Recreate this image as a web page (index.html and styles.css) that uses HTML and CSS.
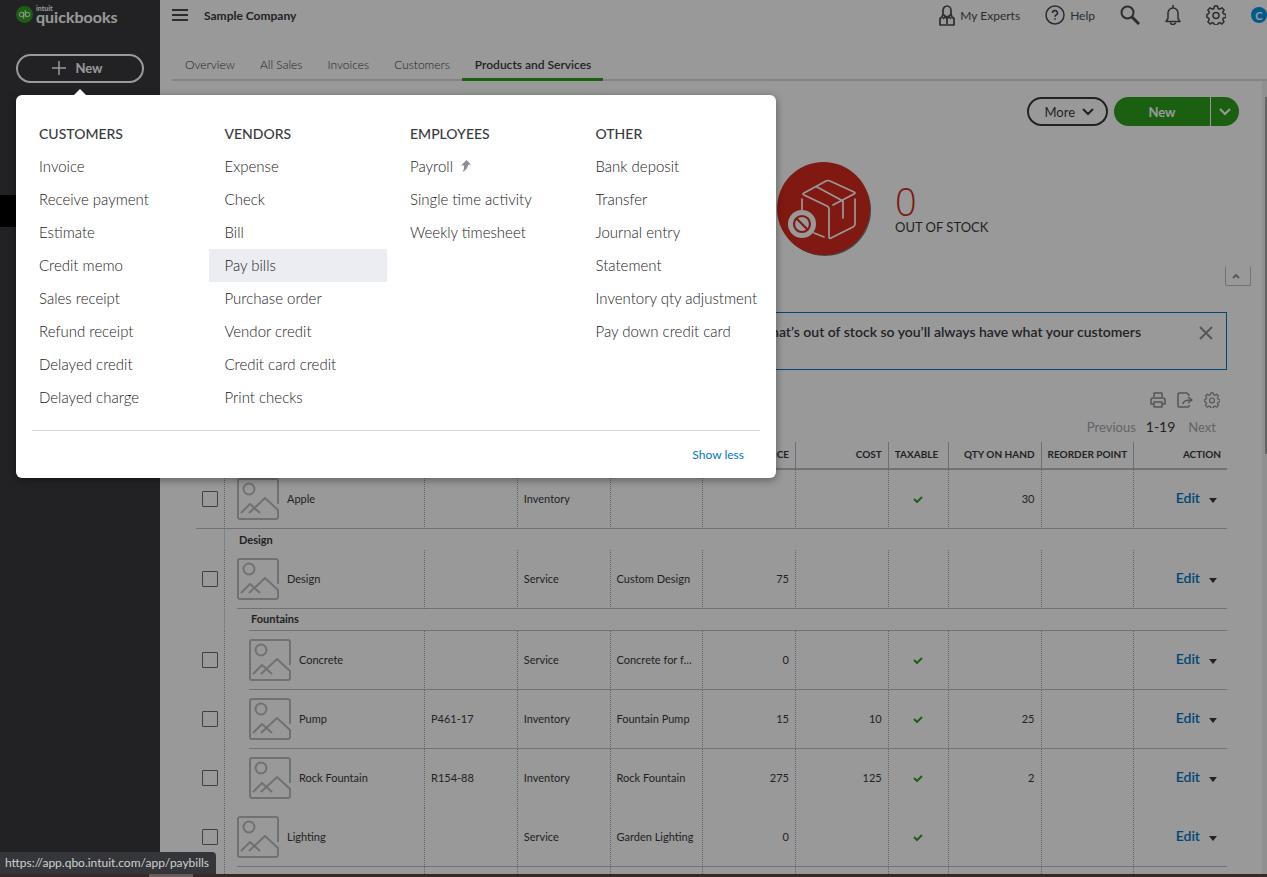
FILE: index.html
```html
<!DOCTYPE html>
<html lang="en">
<head>
    <meta charset="utf-8">
    <title>Products and Services</title>
    <link rel="stylesheet" href="styles.css">
</head>
<body>
    <!-- shared icons -->
    <svg class="defs" aria-hidden="true">
        <symbol id="thumb" viewBox="0 0 42 42">
            <path d="M41 26V3a2 2 0 0 0-2-2H3a2 2 0 0 0-2 2v36a2 2 0 0 0 2 2h36a2 2 0 0 0 2-2v-7L28 20 12 35M4 35l9-9 10 9" fill="none" stroke="#bbbcc0" stroke-width="2" stroke-linejoin="round"/>
            <circle cx="12" cy="11" r="5.500" fill="none" stroke="#bbbcc0" stroke-width="2"/>
        </symbol>
        <symbol id="check" viewBox="0 0 10 8">
            <path d="M1 4l3 3 5-5" fill="none" stroke="#2ca01c" stroke-width="2"/>
        </symbol>
        <symbol id="gear" viewBox="0 0 20 20">
            <path d="M8.500 1h3l.6 2.500 1.600.7 2.200-1.400 2.200 2.200-1.400 2.200.7 1.600 2.500.6v3l-2.500.6-.7 1.600 1.400 2.200-2.200 2.200-2.200-1.400-1.600.7-.6 1.700h-3l-.6-1.700-1.600-.7-2.200 1.400L1.900 16.800l1.400-2.200-.7-1.600-1.700-.6v-3l1.700-.6.7-1.600L1.900 5l2.200-2.200 2.200 1.400 1.600-.7z" fill="none" stroke="currentColor" stroke-width="1.500" stroke-linejoin="round"/>
            <circle cx="10" cy="10.500" r="3" fill="none" stroke="currentColor" stroke-width="1.500"/>
        </symbol>
    </svg>

    <div class="shell">
        <aside class="sidebar">
            <a href="#" class="logo">
                <svg width="17" height="17" viewBox="0 0 17 17" aria-hidden="true">
                    <circle cx="8.500" cy="8.500" r="8.500" fill="#2ca01c"/>
                    <circle cx="5.500" cy="8.500" r="2.200" fill="none" stroke="#fff"/>
                    <circle cx="11.500" cy="8.500" r="2.200" fill="none" stroke="#fff"/>
                    <path d="M7.700 6.300v6.500M9.300 10.700V4.200" stroke="#fff"/>
                </svg>
                <span class="wordmark"><small>intuit</small>quickbooks</span>
            </a>
            <button type="button" class="create">
                <svg width="16" height="16" viewBox="0 0 16 16" aria-hidden="true"><path d="M8 1v14M1 8h14" stroke="currentColor" stroke-width="1.500"/></svg>
                New
            </button>
            <div class="current"></div>
        </aside>

        <main class="main">
            <header class="topbar">
                <button type="button" class="icon" aria-label="Menu">
                    <svg width="16" height="12" viewBox="0 0 16 12"><path d="M0 1h16M0 6h16M0 11h16" stroke="currentColor" stroke-width="2"/></svg>
                </button>
                <strong class="company">Sample Company</strong>
                <nav class="tools">
                    <a href="#">
                        <svg width="16" height="21" viewBox="0 0 16 21" aria-hidden="true"><path d="M4 9V5.500a4 4.500 0 0 1 8 0V9l-2.500 2.500h-3zM4 9l-1 3-2 1.500V20h14v-6.500L13 12l-1-3M4 14l2-2.500L8 14l2-2.500 2 2.500M8 14v5" fill="none" stroke="currentColor" stroke-width="1.700" stroke-linejoin="round"/></svg>
                        My Experts
                    </a>
                    <a href="#">
                        <svg width="20" height="20" viewBox="0 0 20 20" aria-hidden="true"><circle cx="10" cy="10" r="9" fill="none" stroke="currentColor" stroke-width="1.500"/><path d="M7.500 8a2.500 2.300 0 1 1 3.500 2q-1 .5-1 1.800M10 13.200v1.600" fill="none" stroke="currentColor" stroke-width="1.600"/></svg>
                        Help
                    </a>
                    <button type="button" class="icon" aria-label="Search">
                        <svg width="20" height="20" viewBox="0 0 20 20"><circle cx="7.500" cy="7.500" r="6" fill="none" stroke="currentColor" stroke-width="2"/><path d="M12 12l7 7" stroke="currentColor" stroke-width="3"/></svg>
                    </button>
                    <button type="button" class="icon" aria-label="Notifications">
                        <svg width="16" height="20" viewBox="0 0 16 20"><path d="M1 16.500h14l-2-3V8a5 5 0 0 0-10 0v5.500zM8 3V0M5.500 17.500a2.500 2 0 0 0 5 0" fill="none" stroke="currentColor" stroke-width="1.500" stroke-linejoin="round"/></svg>
                    </button>
                    <button type="button" class="icon" aria-label="Settings">
                        <svg width="20" height="20"><use href="#gear"/></svg>
                    </button>
                    <a href="#" class="avatar">C</a>
                </nav>
            </header>

            <nav class="tabs">
                <a href="#">Overview</a>
                <a href="#">All Sales</a>
                <a href="#">Invoices</a>
                <a href="#">Customers</a>
                <a href="#" class="active">Products and Services</a>
            </nav>

            <div class="page">
                <div class="actions">
                    <button type="button" class="more">More
                        <svg width="12" height="8" viewBox="0 0 12 8" aria-hidden="true"><path d="M1 1l5 5 5-5" fill="none" stroke="currentColor" stroke-width="2"/></svg>
                    </button>
                    <div class="split">
                        <button type="button">New</button>
                        <button type="button" aria-label="More ways to add">
                            <svg width="12" height="8" viewBox="0 0 12 8"><path d="M1 1l5 5 5-5" fill="none" stroke="currentColor" stroke-width="2"/></svg>
                        </button>
                    </div>
                </div>

                <section class="stock">
                    <svg width="94" height="94" viewBox="0 0 94 94" aria-hidden="true">
                        <circle cx="48" cy="48" r="46" fill="#777"/>
                        <circle cx="46.500" cy="46.500" r="46.500" fill="#d52b1e"/>
                        <g fill="none" stroke="#fff" stroke-width="1.700" stroke-linejoin="round" stroke-linecap="round">
                            <path d="M27 31q-2 1 0 2l23 11q2 1 2 3v28q0 2 2 1l22-11q2-1 2-3V37M77 32q2-1 0-2L53 19q-2-1-4 0L27 31M40 25l26 14v17M77 32L56 43M25 37v14M47 75l-10-4"/>
                        </g>
                        <circle cx="25" cy="62" r="14" fill="#fff"/>
                        <g fill="none" stroke="#d52b1e" stroke-width="2.200"><circle cx="25" cy="62" r="8"/><path d="M19.500 56.500l11 11"/></g>
                    </svg>
                    <div>
                        <div class="count">0</div>
                        <div class="caption">OUT OF STOCK</div>
                    </div>
                </section>

                <div class="collapse-row">
                    <button type="button" class="collapse" aria-label="Collapse">
                        <svg width="8" height="6" viewBox="0 0 8 6"><path d="M1 5l3-3 3 3" fill="none" stroke="#8d9096" stroke-width="1.800"/></svg>
                    </button>
                </div>

                <div class="banner">
                    <p>what’s out of stock so you’ll always have what your customers</p>
                    <button type="button" class="icon" aria-label="Close">
                        <svg width="14" height="14" viewBox="0 0 14 14"><path d="M1 1l12 12M13 1L1 13" stroke="#8d9096" stroke-width="2"/></svg>
                    </button>
                </div>

                <div class="list-tools">
                    <button type="button" class="icon" aria-label="Print">
                        <svg width="16" height="16" viewBox="0 0 16 16"><path d="M4 5V1h8v4M4 12H1V8q0-2 2-2h10q2 0 2 2v4h-3M4 10h8v5H4z" fill="none" stroke="currentColor" stroke-width="1.500" stroke-linejoin="round"/></svg>
                    </button>
                    <button type="button" class="icon" aria-label="Export">
                        <svg width="16" height="16" viewBox="0 0 16 16"><path d="M12 4V3l-2-2H2q-1 0-1 1v12q0 1 1 1h9q1 0 1-1v-1M6 12q0-4 8-4M11 5l4 3-4 3" fill="none" stroke="currentColor" stroke-width="1.500" stroke-linejoin="round"/></svg>
                    </button>
                    <button type="button" class="icon" aria-label="List settings">
                        <svg width="16" height="16"><use href="#gear"/></svg>
                    </button>
                </div>
                <div class="pager">
                    <a href="#">Previous</a>
                    <span>1-19</span>
                    <a href="#">Next</a>
                </div>

                <table class="items">
                    <colgroup>
                        <col class="c-check"><col class="c-name"><col><col><col><col><col><col class="c-tax"><col><col><col>
                    </colgroup>
                    <thead>
                        <tr><th></th><th></th><th></th><th></th><th></th><th class="num">PRICE</th><th class="num">COST</th><th>TAXABLE</th><th class="num">QTY ON HAND</th><th class="num">REORDER POINT</th><th class="num">ACTION</th></tr>
                    </thead>
                    <tbody>
                        <tr class="full">
                            <td><input type="checkbox" aria-label="Apple"></td>
                            <td><div class="item"><svg width="42" height="42"><use href="#thumb"/></svg>Apple</div></td>
                            <td></td><td>Inventory</td><td></td><td></td><td></td>
                            <td class="tax"><svg width="10" height="8"><use href="#check"/></svg></td>
                            <td class="num">30</td><td></td>
                            <td class="num edit"><a href="#">Edit</a><i class="caret"></i></td>
                        </tr>
                        <tr class="group"><td></td><td colspan="10">Design</td></tr>
                        <tr>
                            <td><input type="checkbox" aria-label="Design"></td>
                            <td><div class="item"><svg width="42" height="42"><use href="#thumb"/></svg>Design</div></td>
                            <td></td><td>Service</td><td>Custom Design</td><td class="num">75</td><td></td>
                            <td></td><td></td><td></td>
                            <td class="num edit"><a href="#">Edit</a><i class="caret"></i></td>
                        </tr>
                        <tr class="group sub"><td></td><td colspan="10"><div>Fountains</div></td></tr>
                        <tr class="sub">
                            <td><input type="checkbox" aria-label="Concrete"></td>
                            <td><div class="item"><svg width="42" height="42"><use href="#thumb"/></svg>Concrete</div></td>
                            <td></td><td>Service</td><td>Concrete for f…</td><td class="num">0</td><td></td>
                            <td class="tax"><svg width="10" height="8"><use href="#check"/></svg></td>
                            <td></td><td></td>
                            <td class="num edit"><a href="#">Edit</a><i class="caret"></i></td>
                        </tr>
                        <tr class="sub">
                            <td><input type="checkbox" aria-label="Pump"></td>
                            <td><div class="item"><svg width="42" height="42"><use href="#thumb"/></svg>Pump</div></td>
                            <td>P461-17</td><td>Inventory</td><td>Fountain Pump</td><td class="num">15</td><td class="num">10</td>
                            <td class="tax"><svg width="10" height="8"><use href="#check"/></svg></td>
                            <td class="num">25</td><td></td>
                            <td class="num edit"><a href="#">Edit</a><i class="caret"></i></td>
                        </tr>
                        <tr class="sub last">
                            <td><input type="checkbox" aria-label="Rock Fountain"></td>
                            <td><div class="item"><svg width="42" height="42"><use href="#thumb"/></svg>Rock Fountain</div></td>
                            <td>R154-88</td><td>Inventory</td><td>Rock Fountain</td><td class="num">275</td><td class="num">125</td>
                            <td class="tax"><svg width="10" height="8"><use href="#check"/></svg></td>
                            <td class="num">2</td><td></td>
                            <td class="num edit"><a href="#">Edit</a><i class="caret"></i></td>
                        </tr>
                        <tr>
                            <td><input type="checkbox" aria-label="Lighting"></td>
                            <td><div class="item"><svg width="42" height="42"><use href="#thumb"/></svg>Lighting</div></td>
                            <td></td><td>Service</td><td>Garden Lighting</td><td class="num">0</td><td></td>
                            <td class="tax"><svg width="10" height="8"><use href="#check"/></svg></td>
                            <td></td><td></td>
                            <td class="num edit"><a href="#">Edit</a><i class="caret"></i></td>
                        </tr>
                        <tr><td></td><td></td><td></td><td></td><td></td><td></td><td></td><td></td><td></td><td></td><td></td></tr>
                    </tbody>
                </table>
                <div class="scrollbar"><div class="scroll-thumb"></div></div>
            </div>
        </main>
    </div>

    <div class="overlay"></div>

    <div class="menu">
        <div class="columns">
            <section>
                <h2>CUSTOMERS</h2>
                <a href="#">Invoice</a>
                <a href="#">Receive payment</a>
                <a href="#">Estimate</a>
                <a href="#">Credit memo</a>
                <a href="#">Sales receipt</a>
                <a href="#">Refund receipt</a>
                <a href="#">Delayed credit</a>
                <a href="#">Delayed charge</a>
            </section>
            <section>
                <h2>VENDORS</h2>
                <a href="#">Expense</a>
                <a href="#">Check</a>
                <a href="#">Bill</a>
                <a href="#" class="hover">Pay bills</a>
                <a href="#">Purchase order</a>
                <a href="#">Vendor credit</a>
                <a href="#">Credit card credit</a>
                <a href="#">Print checks</a>
            </section>
            <section>
                <h2>EMPLOYEES</h2>
                <a href="#">Payroll
                    <svg width="10" height="12" viewBox="0 0 10 12" aria-hidden="true"><path d="M5.500 0L10 4.500 7 5Q7 9 1.500 12 3.500 9 3 5.500L0 5.500z" fill="#8d9096"/></svg>
                </a>
                <a href="#">Single time activity</a>
                <a href="#">Weekly timesheet</a>
            </section>
            <section>
                <h2>OTHER</h2>
                <a href="#">Bank deposit</a>
                <a href="#">Transfer</a>
                <a href="#">Journal entry</a>
                <a href="#">Statement</a>
                <a href="#">Inventory qty adjustment</a>
                <a href="#">Pay down credit card</a>
            </section>
        </div>
        <div class="menu-foot"><a href="#">Show less</a></div>
    </div>

    <div class="status">https://app.qbo.intuit.com/app/paybills</div>
    <div class="taskbar"><div class="task"></div></div>
</body>
</html>
```

FILE: styles.css
```css
* {
    box-sizing: border-box;
}

body {
    margin: 0;
    height: 100vh;
    overflow: hidden;
    display: flex;
    flex-direction: column;
    font-family: Lato, "Open Sans", sans-serif;
    font-size: 13px;
    color: #393a3d;
}

a {
    color: inherit;
    text-decoration: none;
}

button {
    font: inherit;
    color: inherit;
    background: none;
    border: 0;
    padding: 0;
}

svg {
    display: block;
    flex: none;
}

.defs {
    position: absolute;
    width: 0;
    height: 0;
}

.icon {
    display: flex;
}

.shell {
    flex: 1;
    min-height: 0;
    display: flex;
}

/* sidebar */
.sidebar {
    width: 160px;
    flex: none;
    background: #393a3d;
    color: #fff;
}

.logo {
    display: flex;
    gap: 3px;
    padding: 6px 16px 0;
    height: 54px;
}

.wordmark {
    font-size: 16px;
    font-weight: 700;
    line-height: 14px;
}

.wordmark small {
    display: block;
    font-size: 7px;
    line-height: 4px;
}

.create {
    display: flex;
    align-items: center;
    justify-content: center;
    gap: 8px;
    width: 128px;
    height: 29px;
    margin: 0 16px;
    padding: 0 6px 2px 0;
    border: 2px solid #fff;
    border-radius: 15px;
    font-weight: 700;
}

.current {
    height: 32px;
    margin-top: 112px;
    background: #000;
}

/* top bar */
.main {
    flex: 1;
    min-width: 0;
    display: flex;
    flex-direction: column;
    background: #fff;
}

.topbar {
    display: flex;
    align-items: center;
    flex: none;
    height: 30px;
    padding-left: 12px;
    color: #4a4b50;
}

.company {
    margin-left: 16px;
    font-size: 12px;
    color: #393a3d;
}

.tools {
    display: flex;
    align-items: center;
    gap: 25px;
    margin-left: auto;
}

.tools a {
    display: flex;
    align-items: center;
    gap: 5px;
    font-size: 12px;
}

.tools .avatar {
    justify-content: center;
    width: 16px;
    height: 16px;
    border-radius: 50%;
    background: #0097e6;
    color: #fff;
    font-size: 11px;
    font-weight: 700;
}

.tabs {
    display: flex;
    flex: none;
    height: 51px;
    margin-left: 12px;
    box-shadow: inset 0 -2px #dcdcdc;
    font-size: 12px;
    font-weight: 300;
}

.tabs a {
    display: flex;
    align-items: center;
    padding: 20px 12px 0 13px;
    border-bottom: 3px solid transparent;
    color: #393a3d;
}

.tabs .active {
    border-color: #2ca01c;
    border-radius: 1px;
    font-weight: 600;
}

/* page */
.page {
    position: relative;
    flex: 1;
    min-height: 0;
    overflow: hidden;
    padding: 16px 40px 0 36px;
}

.actions {
    display: flex;
    justify-content: flex-end;
    gap: 6px;
    margin-right: -12px;
}

.more {
    display: flex;
    align-items: center;
    gap: 7px;
    height: 29px;
    padding: 0 12px 0 15px;
    border: 2px solid #393a3d;
    border-radius: 15px;
    font-size: 13px;
}

.split {
    display: flex;
    height: 29px;
    border-radius: 15px;
    overflow: hidden;
    background: #2ca01c;
    color: #fff;
    font-weight: 700;
}

.split button {
    width: 96px;
}

.split button + button {
    display: flex;
    align-items: center;
    justify-content: center;
    width: 29px;
    border-left: 1px solid #fff;
}

.stock {
    display: flex;
    align-items: center;
    gap: 24px;
    width: 450px;
    margin: 36px 0 0 auto;
}

.count {
    font-family: "Open Sans", sans-serif;
    font-size: 38px;
    font-weight: 300;
    line-height: 36px;
    color: #d52b1e;
}

.caption {
    font-size: 13px;
    line-height: 16px;
}

.collapse-row {
    display: flex;
    justify-content: flex-end;
    margin: 10px -24px 0 0;
}

.collapse {
    display: flex;
    align-items: center;
    justify-content: center;
    width: 26px;
    height: 20px;
    padding-right: 4px;
    border: 1px solid #babec5;
    border-top: 0;
    border-radius: 2px;
}

.banner {
    display: flex;
    justify-content: flex-end;
    align-items: flex-start;
    gap: 58px;
    height: 58px;
    margin-top: 26px;
    padding: 10px 13px;
    border: 1px solid #0077c5;
}

.banner p {
    margin: 0;
    font-size: 14px;
    font-weight: 600;
    line-height: 18px;
}

.banner .icon {
    margin-top: 3px;
}

.list-tools {
    display: flex;
    justify-content: flex-end;
    gap: 11px;
    padding: 22px 7px 0;
    color: #8d9096;
}

.pager {
    display: flex;
    justify-content: flex-end;
    gap: 10px;
    height: 34px;
    padding: 10px 11px 0;
    line-height: 18px;
    color: #a4a7ac;
}

.pager span {
    padding-right: 3px;
    font-size: 14px;
    color: #393a3d;
}

/* items table */
.items {
    width: 100%;
    table-layout: fixed;
    border-collapse: separate;
    border-spacing: 0;
    font-size: 11px;
}

.c-check {
    width: 29px;
}

.c-name {
    width: 200px;
}

.c-tax {
    width: 60px;
}

.items th {
    height: 28px;
    padding: 0 6px 2px;
    border-right: 1px solid #b5b7bb;
    border-bottom: 2px solid #babec5;
    font-size: 10px;
    text-align: left;
    white-space: nowrap;
}

.items td {
    height: 59px;
    padding: 0 6px 2px;
    border-right: 1px dotted #a4a7ac;
    border-bottom: 1px solid #babec5;
    white-space: nowrap;
}

.items .num {
    text-align: right;
}

.items th:last-child,
.items td:last-child {
    border-right: 0;
}

.items td:first-child {
    padding: 0 6px;
    border-bottom-color: transparent;
}

.items td:nth-child(2) {
    padding: 0 0 0 12px;
    border-bottom: 0;
}

.items .full td {
    border-bottom: 1px solid #babec5;
}

.items .sub td:nth-child(2) {
    padding-left: 24px;
}

.items .last td {
    border-bottom-color: transparent;
}

.items .tax {
    padding-bottom: 0;
}

.tax svg {
    margin: 0 auto;
}

.item {
    display: flex;
    align-items: center;
    gap: 8px;
    height: 59px;
    padding-bottom: 1px;
    border-bottom: 1px solid #babec5;
}

.last .item {
    border-color: transparent;
}

.full .item {
    height: 58px;
    border: 0;
}

.items .group td {
    height: 21px;
    border-bottom: 0;
    padding-left: 14px;
    font-weight: 700;
}

.items .group td:first-child {
    border-right: 1px solid #d4d7dc;
}

.items .group.sub td:nth-child(2) {
    padding-left: 24px;
}

.group div {
    height: 22px;
    padding-left: 2px;
    border-bottom: 1px solid #babec5;
    line-height: 20px;
}

.items input {
    appearance: none;
    display: block;
    width: 16px;
    height: 16px;
    margin: 0;
    border: 1px solid #6b6c72;
    border-radius: 1px;
}

.items .edit {
    padding-bottom: 4px;
}

.edit a {
    color: #0077c5;
    font-size: 14px;
    font-weight: 600;
}

.caret {
    display: inline-block;
    margin: 0 4px 0 9px;
    border: 4px solid transparent;
    border-top: 5px solid #393a3d;
    border-bottom: 0;
}

.scrollbar {
    position: absolute;
    top: 0;
    right: 0;
    bottom: 0;
    width: 5px;
    padding: 16px 0 0 3px;
    background: #f1f1f1;
}

.scroll-thumb {
    height: 46%;
    background: #a8a8a8;
}

.overlay {
    position: absolute;
    inset: 0;
    background: rgba(0, 0, 0, 0.4);
}

/* create menu */
.menu {
    position: absolute;
    top: 95px;
    left: 16px;
    width: 760px;
    padding: 22px 16px 0 7px;
    border-radius: 6px;
    background: #fff;
    box-shadow: 0 2px 8px rgba(0, 0, 0, 0.4);
    font-size: 14px;
}

.menu::before {
    content: "";
    position: absolute;
    top: -6px;
    left: 58px;
    border: 6px solid transparent;
    border-top: 0;
    border-bottom-color: #fff;
}

.columns {
    display: grid;
    grid-template-columns: repeat(4, minmax(0, 1fr));
    gap: 7px;
    height: 313px;
    padding-right: 2px;
}

.menu h2 {
    margin: 0;
    padding: 0 16px;
    font-size: 14px;
    font-weight: 500;
    line-height: 33px;
    height: 33px;
}

.columns a {
    display: flex;
    align-items: center;
    gap: 8px;
    height: 33px;
    padding: 0 16px 2px;
    font-size: 15px;
    font-weight: 300;
    color: #222;
    white-space: nowrap;
}

.columns .hover {
    background: #ecedf2;
}

.menu-foot {
    margin-left: 9px;
    padding: 0 16px;
    border-top: 1px solid #d4d7dc;
    font-size: 12px;
    line-height: 47px;
    text-align: right;
    color: #0077c5;
}

/* browser chrome */
.status {
    position: absolute;
    left: 0;
    bottom: 3px;
    height: 22px;
    padding: 0 7px 0 5px;
    border-radius: 0 4px 0 0;
    background: #35363a;
    color: #d0d1d4;
    font-size: 12px;
    line-height: 21px;
}

.taskbar {
    position: relative;
    flex: none;
    height: 3px;
    background: #3a2827;
}

.task {
    width: 44px;
    height: 3px;
    margin-left: 149px;
    background: #6b5a5a;
}
```
